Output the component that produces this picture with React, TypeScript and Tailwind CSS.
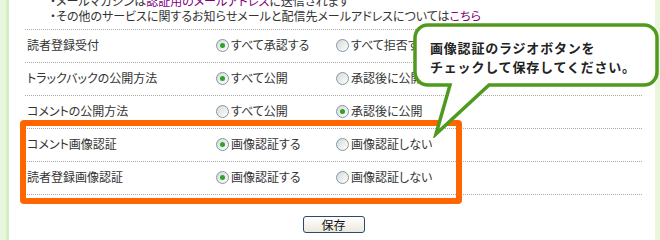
import React from 'react';

type Row = {
  label: string;
  options: [string, string];
  checked: 0 | 1;
};

const rows: Row[] = [
  { label: '読者登録受付', options: ['すべて承認する', 'すべて拒否する'], checked: 0 },
  { label: 'トラックバックの公開方法', options: ['すべて公開', '承認後に公開'], checked: 0 },
  { label: 'コメントの公開方法', options: ['すべて公開', '承認後に公開'], checked: 1 },
  { label: 'コメント画像認証', options: ['画像認証する', '画像認証しない'], checked: 0 },
  { label: '読者登録画像認証', options: ['画像認証する', '画像認証しない'], checked: 0 },
];

function Radio({ checked, label }: { checked: boolean; label: string }) {
  return (
    <label className="flex items-center gap-[2px]">
      <span className="flex h-[13px] w-[13px] items-center justify-center rounded-full border border-[#7d97b0] bg-gradient-to-br from-[#d8d8d2] to-white">
        {checked ? <span className="h-[5px] w-[5px] rounded-full bg-[#2ea12e]" /> : null}
      </span>
      <span>{label}</span>
    </label>
  );
}

export default function App() {
  return (
    <div
      className="flex h-[240px] w-[660px] overflow-hidden bg-white text-[12px] text-[#333] [font-feature-settings:'palt']"
      style={{ fontFamily: '"Noto Sans CJK JP", "Noto Sans", sans-serif' }}
    >
      {/* left side band */}
      <div className="flex w-[9px] shrink-0">
        <div className="w-[6px] bg-[#e8f6dc]" />
        <div className="w-[3px] bg-[#d5edc2]" />
      </div>

      <div className="relative flex-1 pl-[16px] pr-[13px]">
        <div className="-mt-[7px] mb-[6px] ml-[25px] leading-[15px]">
          <p>
            ・メールマガジンは<span className="text-[#800080]">認証用のメールアドレス</span>に送信されます
          </p>
          <p>
            ・その他のサービスに関するお知らせメールと配信先メールアドレスについては
            <span className="text-[#800080]">こちら</span>
          </p>
        </div>

        <div className="border-t border-dotted border-[#aaa]">
          {rows.map((row) => (
            <div
              key={row.label}
              className="flex h-[33px] items-center border-b border-dotted border-[#aaa] pb-[2px] pl-[2px]"
            >
              <div className="w-[189px]">{row.label}</div>
              <div className="w-[120px]">
                <Radio checked={row.checked === 0} label={row.options[0]} />
              </div>
              <div>
                <Radio checked={row.checked === 1} label={row.options[1]} />
              </div>
            </div>
          ))}
        </div>

        <div className="mt-[21px] flex justify-center">
          <button className="h-[17px] w-[62px] rounded-[3px] border border-[#2b4a6b] bg-gradient-to-b from-white to-[#ebe8dc] text-[12px] leading-[15px] text-[#111]">
            保存
          </button>
        </div>

        {/* highlight */}
        <div className="absolute left-[11px] top-[120px] h-[84px] w-[442px] rounded-[4px] border-[6px] border-[#ff6600]" />

        {/* callout */}
        <svg
          className="absolute left-[404px] top-[23px]"
          width="247"
          height="115"
          viewBox="0 0 247 115"
        >
          <path
            d="M 15 2 H 231 A 13 13 0 0 1 244 15 V 49 A 13 13 0 0 1 231 62 H 76 L 23 111 L 37 62 H 15 A 13 13 0 0 1 2 49 V 15 A 13 13 0 0 1 15 2 Z"
            fill="white"
            stroke="#4f9a1c"
            strokeWidth="3.5"
            strokeLinejoin="miter"
            strokeMiterlimit="10"
          />
        </svg>
        <div className="absolute left-[421px] top-[38px] text-[13px] font-bold leading-[19px] tracking-[0.8px] text-[#222] [font-feature-settings:normal]">
          <p>画像認証のラジオボタンを</p>
          <p>チェックして保存してください。</p>
        </div>
      </div>

      {/* right side band */}
      <div className="w-[5px] shrink-0 bg-[#e8f6dc]" />
    </div>
  );
}
